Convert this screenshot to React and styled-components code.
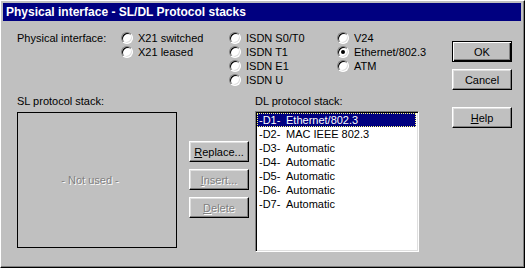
import React from "react";
import styled, { createGlobalStyle, css } from "styled-components";

const GlobalStyle = createGlobalStyle`
  html, body {
    margin: 0;
    padding: 0;
    background: #c0c0c0;
  }
  body {
    font-family: "Liberation Sans", Arial, sans-serif;
    font-size: 11px;
    color: #000;
  }
`;

const Window = styled.div`
  box-sizing: border-box;
  width: 525px;
  height: 268px;
  background: #c0c0c0;
  border: 1px solid;
  border-color: #ffffff #000000 #000000 #ffffff;
  box-shadow: inset -1px -1px #808080;
  padding: 2px 3px 3px 2px;
  display: flex;
  flex-direction: column;
`;

const TitleBar = styled.div`
  height: 18px;
  flex: none;
  background: #000080;
  color: #fff;
  font-weight: bold;
  font-size: 12px;
  display: flex;
  align-items: center;
  padding-left: 3px;
  white-space: nowrap;
`;

const Body = styled.div`
  display: flex;
  padding: 10px 9px 0 14px;
`;

const Main = styled.div`
  display: flex;
  flex-direction: column;
`;

const TopRow = styled.div`
  display: flex;
`;

const FieldLabel = styled.div`
  width: 104px;
  line-height: 14px;
  white-space: nowrap;
`;

const RadioGroup = styled.div`
  display: flex;
`;

const RadioColumn = styled.div`
  width: 108px;
  display: flex;
  flex-direction: column;
`;

const RadioItem = styled.label`
  height: 14px;
  display: flex;
  align-items: center;
  gap: 5px;
  white-space: nowrap;
`;

const RadioCircle = styled.span`
  box-sizing: border-box;
  width: 12px;
  height: 12px;
  flex: none;
  border-radius: 50%;
  background: #fff;
  border: 1px solid;
  border-color: #808080 #ffffff #ffffff #808080;
  box-shadow: inset 1px 1px #000, inset -1px -1px #dfdfdf;
  display: flex;
  align-items: center;
  justify-content: center;

  &::after {
    content: "";
    width: 4px;
    height: 4px;
    border-radius: 50%;
    background: #000;
    display: ${(p) => (p.$checked ? "block" : "none")};
  }
`;

const StacksRow = styled.div`
  display: flex;
  margin-top: 7px;
`;

const StackColumn = styled.div`
  display: flex;
  flex-direction: column;
  width: ${(p) => p.$width}px;
  margin-left: ${(p) => p.$offset || 0}px;
`;

const Caption = styled.div`
  line-height: 14px;
  margin-bottom: 3px;
  white-space: nowrap;
`;

const FrameBox = styled.div`
  box-sizing: border-box;
  height: 136px;
  margin-top: 1px;
  border: 1px solid #000;
  display: flex;
  align-items: center;
  justify-content: center;
  padding-right: 14px;
`;

const DisabledText = styled.span`
  color: #808080;
  text-shadow: 1px 1px 0 #fff;
`;

const ActionColumn = styled.div`
  display: flex;
  flex-direction: column;
  gap: 7px;
  margin-left: 12px;
  padding-top: 47px;
`;

const Button = styled.button`
  box-sizing: border-box;
  width: 60px;
  height: 21px;
  padding: 0;
  background: #c0c0c0;
  font: 11px "Liberation Sans", Arial, sans-serif;
  color: #000;
  border: 1px solid;
  border-color: #ffffff #000000 #000000 #ffffff;
  box-shadow: inset -1px -1px #808080, inset 1px 1px #dfdfdf;
  margin-top: ${(p) => p.$space || 0}px;

  &:disabled {
    color: #808080;
    text-shadow: 1px 1px 0 #fff;
  }

  ${(p) =>
    p.$default &&
    css`
      border-color: #000;
      box-shadow: inset 1px 1px #fff, inset -1px -1px #000,
        inset -2px -2px #808080;
    `}

  u {
    text-decoration-thickness: 1px;
    text-underline-offset: 1px;
  }
`;

const ListBox = styled.div`
  box-sizing: border-box;
  height: 141px;
  background: #fff;
  border: 1px solid;
  border-color: #808080 #ffffff #ffffff #808080;
  box-shadow: inset 1px 1px #000, inset -1px -1px #dfdfdf;
  padding: 1px 2px 1px 1px;
`;

const ListRow = styled.div`
  height: 14px;
  line-height: 14px;
  display: flex;
  padding-left: 2px;
  white-space: nowrap;

  ${(p) =>
    p.$selected &&
    css`
      background: #000080;
      color: #fff;
      outline: 1px dotted #ffff7f;
      outline-offset: -1px;
    `}
`;

const RowCode = styled.span`
  width: 27px;
  flex: none;
`;

const SideColumn = styled.div`
  display: flex;
  flex-direction: column;
  gap: 7px;
  margin-left: auto;
  padding-top: 10px;
`;

const radioColumns = [
  [
    { label: "X21 switched" },
    { label: "X21 leased" },
  ],
  [
    { label: "ISDN S0/T0" },
    { label: "ISDN T1" },
    { label: "ISDN E1" },
    { label: "ISDN U" },
  ],
  [
    { label: "V24" },
    { label: "Ethernet/802.3", checked: true },
    { label: "ATM" },
  ],
];

const dlStack = [
  ["-D1-", "Ethernet/802.3"],
  ["-D2-", "MAC IEEE 802.3"],
  ["-D3-", "Automatic"],
  ["-D4-", "Automatic"],
  ["-D5-", "Automatic"],
  ["-D6-", "Automatic"],
  ["-D7-", "Automatic"],
];

export default function App() {
  return (
    <>
      <GlobalStyle />
      <Window>
        <TitleBar>Physical interface - SL/DL Protocol stacks</TitleBar>
        <Body>
          <Main>
            <TopRow>
              <FieldLabel>Physical interface:</FieldLabel>
              <RadioGroup>
                {radioColumns.map((col, i) => (
                  <RadioColumn key={i}>
                    {col.map((r) => (
                      <RadioItem key={r.label}>
                        <RadioCircle $checked={r.checked} />
                        {r.label}
                      </RadioItem>
                    ))}
                  </RadioColumn>
                ))}
              </RadioGroup>
            </TopRow>

            <StacksRow>
              <StackColumn $width={160}>
                <Caption>SL protocol stack:</Caption>
                <FrameBox>
                  <DisabledText>- Not used -</DisabledText>
                </FrameBox>
              </StackColumn>

              <ActionColumn>
                <Button>
                  <u>R</u>eplace...
                </Button>
                <Button disabled>
                  <u>I</u>nsert...
                </Button>
                <Button disabled>
                  <u>D</u>elete
                </Button>
              </ActionColumn>

              <StackColumn $width={164} $offset={6}>
                <Caption>DL protocol stack:</Caption>
                <ListBox>
                  {dlStack.map(([code, name], i) => (
                    <ListRow key={code} $selected={i === 0}>
                      <RowCode>{code}</RowCode>
                      {name}
                    </ListRow>
                  ))}
                </ListBox>
              </StackColumn>
            </StacksRow>
          </Main>

          <SideColumn>
            <Button $default>OK</Button>
            <Button>Cancel</Button>
            <Button $space={10}>
              <u>H</u>elp
            </Button>
          </SideColumn>
        </Body>
      </Window>
    </>
  );
}
